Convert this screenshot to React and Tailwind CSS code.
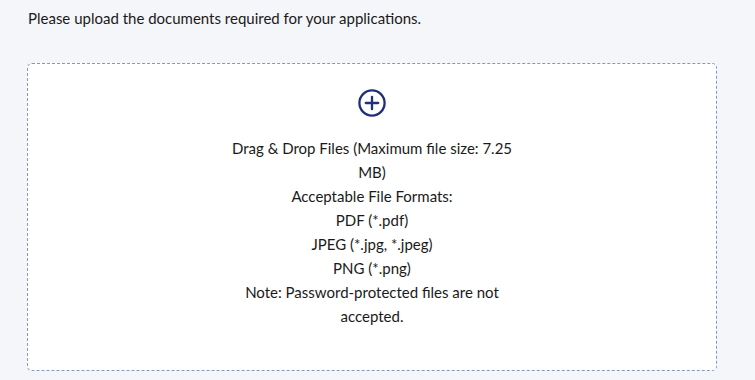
export default function App() {
  return (
    <div className="w-[755px] h-[380px] bg-[#f5f6fa] overflow-hidden" style={{ fontFamily: "Lato, 'Noto Sans', sans-serif" }}>
      <div className="pl-[28px] pt-[8px] text-[15px] leading-[20px] text-[#1a1a1a]">
        Please upload the documents required for your applications.
      </div>
      <div className="ml-[27px] mt-[35px] w-[690px] h-[308px] bg-white border border-dashed border-[#8595c4] rounded-[5px] flex flex-col items-center pt-[25px]">
        <svg width="28" height="28" viewBox="0 0 28 28" fill="none" stroke="#1f2f7a" strokeWidth="2.3">
          <circle cx="14" cy="14" r="12.6" />
          <path d="M14 7.8v12.4M7.8 14h12.4" strokeLinecap="round" />
        </svg>
        <div className="mt-[19px] w-[296px] text-center text-[15px] leading-[24px] text-[#1a1a1a]">
          <div>Drag &amp; Drop Files (Maximum file size: 7.25 MB)</div>
          <div>Acceptable File Formats:</div>
          <div>PDF (*.pdf)</div>
          <div>JPEG (*.jpg, *.jpeg)</div>
          <div>PNG (*.png)</div>
          <div>Note: Password-protected files are not accepted.</div>
        </div>
      </div>
    </div>
  );
}
